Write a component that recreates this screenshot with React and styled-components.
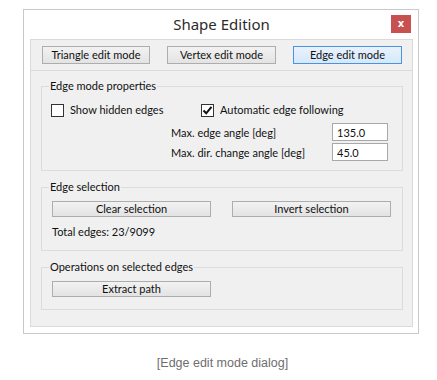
import styled, { createGlobalStyle } from 'styled-components';

const GlobalStyle = createGlobalStyle`
  body {
    margin: 0;
    background: #fff;
    font-family: Lato, 'Noto Sans', sans-serif;
  }
`;

const Page = styled.div`
  width: 437px;
  height: 380px;
  padding-top: 9px;
  box-sizing: border-box;
`;

const Window = styled.div`
  margin-left: 23px;
  width: 396px;
  height: 325px;
  box-sizing: border-box;
  border: 1px solid #c9c9c9;
  background: #fff;
  display: flex;
  flex-direction: column;
  padding: 0 5px 6px 6px;
`;

const TitleBar = styled.div`
  height: 29px;
  display: grid;
  grid-template-columns: 1fr auto 1fr;
  align-items: start;

  h1 {
    grid-column: 2;
    margin: 0;
    padding-top: 5px;
    font-family: 'Noto Sans', sans-serif;
    font-size: 15px;
    font-weight: 400;
    line-height: 18px;
    color: #2b2b2b;
  }
`;

const CloseButton = styled.button`
  grid-column: 3;
  justify-self: end;
  margin-top: 5px;
  margin-right: 2px;
  width: 20px;
  height: 18px;
  border: none;
  padding: 0;
  background: #c75050;
  color: #fff;
  font-family: 'DejaVu Sans', sans-serif;
  font-size: 10px;
  font-weight: 700;
  line-height: 18px;
`;

const Panel = styled.div`
  flex: 1;
  border: 1px solid #dadada;
  background: #f0f0f0;
  display: flex;
  flex-direction: column;
`;

const ModeBar = styled.div`
  display: flex;
  justify-content: space-between;
  padding: 6px 10px 6px 11px;
  border-bottom: 1px solid #dadada;
`;

const Button = styled.button`
  width: ${(p) => p.$width || 108}px;
  height: ${(p) => p.$height || 18}px;
  padding: 0;
  box-sizing: border-box;
  border: 1px solid ${(p) => (p.$active ? '#4a93de' : '#adadad')};
  background: ${(p) =>
    p.$active
      ? 'linear-gradient(#e8f2fd, #d6e8fb)'
      : 'linear-gradient(#f2f2f2, #e3e3e3)'};
  font-family: Lato, 'Noto Sans', sans-serif;
  font-size: 11px;
  line-height: 14px;
  color: #111;
`;

const Body = styled.div`
  display: flex;
  flex-direction: column;
  gap: 8px;
  padding: 7px 9px 0 10px;
`;

const Group = styled.fieldset`
  margin: 0;
  min-width: 0;
  border: 1px solid #dcdcdc;
  padding: 0;

  legend {
    margin-left: 7px;
    padding: 0 1px;
    font-size: 11px;
    line-height: 16px;
    color: #111;
  }
`;

const GroupBody = styled.div`
  display: flex;
  flex-direction: column;
  padding: ${(p) => p.$padding};
`;

const CheckRow = styled.div`
  display: flex;
  align-items: center;
  font-size: 11px;
  color: #111;
`;

const Check = styled.label`
  display: flex;
  align-items: center;
  gap: 6px;
  width: ${(p) => p.$width}px;
  line-height: 16px;
`;

const Box = styled.span`
  width: 13px;
  height: 13px;
  box-sizing: border-box;
  border: 1px solid #333;
  background: #fff;
  display: flex;
  align-items: center;
  justify-content: center;
`;

const FieldRow = styled.div`
  display: flex;
  align-items: center;
  padding-left: 120px;
  margin-top: ${(p) => p.$top}px;
  font-size: 11px;
  color: #111;

  span {
    flex: 1;
  }
`;

const Input = styled.input`
  width: 56px;
  height: 18px;
  box-sizing: border-box;
  border: 1px solid #a8a8a8;
  background: #fff;
  padding: 0 4px;
  font-family: Lato, 'Noto Sans', sans-serif;
  font-size: 11px;
  color: #111;
`;

const ButtonRow = styled.div`
  display: flex;
  gap: 21px;
`;

const Note = styled.div`
  margin-top: 7px;
  font-size: 11px;
  line-height: 16px;
  color: #111;
`;

const Caption = styled.p`
  margin: 21px 0 0;
  text-align: center;
  padding-left: 8px;
  font-family: 'Liberation Sans', Arial, sans-serif;
  font-size: 12.5px;
  line-height: 16px;
  color: #6e6e6e;
`;

const Checkmark = () => (
  <svg width="11" height="11" viewBox="0 0 11 11">
    <path d="M1.5 5.5 L4.2 8.3 L9.5 1.8" fill="none" stroke="#111" strokeWidth="2" />
  </svg>
);

const App = () => {
  return (
    <Page>
      <GlobalStyle />
      <Window>
        <TitleBar>
          <h1>Shape Edition</h1>
          <CloseButton>x</CloseButton>
        </TitleBar>
        <Panel>
          <ModeBar>
            <Button $width={108}>Triangle edit mode</Button>
            <Button $width={109}>Vertex edit mode</Button>
            <Button $width={109} $active>
              Edge edit mode
            </Button>
          </ModeBar>
          <Body>
            <Group>
              <legend>Edge mode properties</legend>
              <GroupBody $padding="8px 14px 9px 9px">
                <CheckRow>
                  <Check $width={150}>
                    <Box />
                    Show hidden edges
                  </Check>
                  <Check>
                    <Box>
                      <Checkmark />
                    </Box>
                    Automatic edge following
                  </Check>
                </CheckRow>
                <FieldRow $top={5}>
                  <span>Max. edge angle [deg]</span>
                  <Input defaultValue="135.0" />
                </FieldRow>
                <FieldRow $top={2}>
                  <span>Max. dir. change angle [deg]</span>
                  <Input defaultValue="45.0" />
                </FieldRow>
              </GroupBody>
            </Group>
            <Group>
              <legend>Edge selection</legend>
              <GroupBody $padding="6px 10px 10px 10px">
                <ButtonRow>
                  <Button $width={159} $height={16}>Clear selection</Button>
                  <Button $width={159} $height={16}>Invert selection</Button>
                </ButtonRow>
                <Note>Total edges: 23/9099</Note>
              </GroupBody>
            </Group>
            <Group>
              <legend>Operations on selected edges</legend>
              <GroupBody $padding="6px 10px 12px 10px">
                <ButtonRow>
                  <Button $width={159} $height={16}>Extract path</Button>
                </ButtonRow>
              </GroupBody>
            </Group>
          </Body>
        </Panel>
      </Window>
      <Caption>[Edge edit mode dialog]</Caption>
    </Page>
  );
};

export default App;
